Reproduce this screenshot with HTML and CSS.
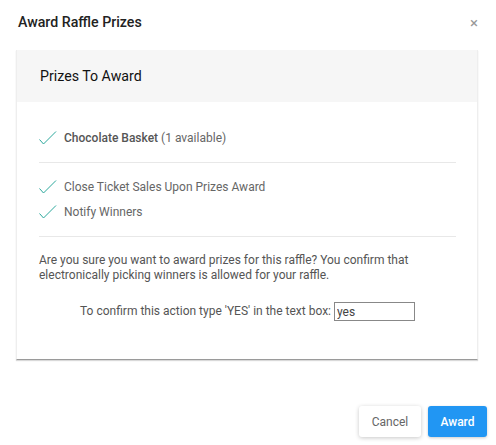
FILE: index.html
```html
<!DOCTYPE html>
<html>
<head>
<meta charset="utf-8">
<link rel="stylesheet" href="styles.css">
</head>
<body>
<div class="modal">
  <div class="modal-header">
    <h1 class="modal-title">Award Raffle Prizes</h1>
    <span class="close">&times;</span>
  </div>
  <div class="card">
    <div class="card-header">Prizes To Award</div>
    <div class="card-body">
      <ul class="list">
        <li class="item"><svg class="check" viewBox="0 0 18 14" width="18" height="14"><path d="M0.5 8.5 L4.5 13 L17 0.5" fill="none" stroke="#2aa79b" stroke-width="1"/></svg><span><b class="prize">Chocolate Basket</b> (1 available)</span></li>
      </ul>
      <hr class="divider">
      <ul class="list">
        <li class="item"><svg class="check" viewBox="0 0 18 14" width="18" height="14"><path d="M0.5 8.5 L4.5 13 L17 0.5" fill="none" stroke="#2aa79b" stroke-width="1"/></svg><span>Close Ticket Sales Upon Prizes Award</span></li>
        <li class="item"><svg class="check" viewBox="0 0 18 14" width="18" height="14"><path d="M0.5 8.5 L4.5 13 L17 0.5" fill="none" stroke="#2aa79b" stroke-width="1"/></svg><span>Notify Winners</span></li>
      </ul>
      <hr class="divider divider-last">
      <p class="warning">Are you sure you want to award prizes for this raffle? You confirm that electronically picking winners is allowed for your raffle.</p>
      <p class="confirm">To confirm this action type 'YES' in the text box: <input class="confirm-input" type="text" value="yes"></p>
    </div>
  </div>
  <div class="modal-footer">
    <button class="btn btn-cancel">Cancel</button>
    <button class="btn btn-award">Award</button>
  </div>
</div>
</body>
</html>
```
FILE: styles.css
```css
html, body {
  margin: 0;
  padding: 0;
  background: #fff;
}
body {
  font-family: Roboto, "Liberation Sans", sans-serif;
  color: #555;
}
.modal {
  width: 496px;
  height: 445px;
  box-sizing: border-box;
  display: flex;
  flex-direction: column;
}
.modal-header {
  display: flex;
  justify-content: space-between;
  align-items: flex-start;
  padding: 13px 18px 0 18px;
  height: 50px;
  box-sizing: border-box;
}
.modal-title {
  margin: 0;
  font-size: 14.2px;
  font-weight: 500;
  color: #222;
  line-height: 18px;
}
.close {
  font-size: 15px;
  line-height: 16px;
  color: #999;
  margin-top: 2px;
}
.card {
  margin: 0 18px 0 16px;
  border-left: 1px solid #eee;
  border-right: 1px solid #eee;
  border-bottom: 1px solid #9a9a9a;
  box-shadow: 0 1px 1px rgba(0,0,0,0.15);
}
.card-header {
  background: #f6f6f6;
  height: 52px;
  box-sizing: border-box;
  padding-left: 23px;
  display: flex;
  align-items: center;
  font-size: 14.2px;
  color: #111;
}
.card-body {
  padding: 27px 21px 38px 22px;
}
.list {
  list-style: none;
  margin: 0;
  padding: 0;
  display: flex;
  flex-direction: column;
  gap: 7px;
}
.item {
  display: flex;
  align-items: center;
  font-size: 12px;
  line-height: 18px;
  color: #666;
}
.check {
  margin: 0 7px 0 0;
  flex: none;
}
.prize {
  font-weight: 500;
  color: #555;
}
.divider {
  border: 0;
  border-top: 1px solid #e8e8e8;
  margin: 15px 0 15px 0;
}
.divider-last {
  margin-bottom: 16px;
}
.divider + .list {
  margin-top: 1px;
}
.warning {
  margin: 0;
  font-size: 12px;
  line-height: 15px;
  color: #555;
  padding-right: 20px;
}
.confirm {
  margin: 19px 0 0 0;
  text-align: center;
  font-size: 12px;
  color: #555;
  line-height: 19px;
}
.confirm-input {
  width: 81px;
  height: 19px;
  box-sizing: border-box;
  border: 1px solid #888;
  padding: 0 2px;
  font-family: Roboto, "Liberation Sans", sans-serif;
  font-size: 12px;
  color: #444;
  vertical-align: middle;
  margin: 0;
}
.modal-footer {
  display: flex;
  justify-content: flex-end;
  gap: 7px;
  padding: 0 9px 0 0;
  margin-top: 46px;
}
.btn {
  height: 31px;
  border: 0;
  border-radius: 3px;
  font-family: Roboto, "Liberation Sans", sans-serif;
  font-size: 12px;
  padding: 0;
  cursor: pointer;
}
.btn-cancel {
  width: 62px;
  background: #fff;
  color: #666;
  box-shadow: 0 1px 4px rgba(0,0,0,0.22);
}
.btn-award {
  width: 59px;
  background: #2196f3;
  color: #fff;
  font-weight: 500;
  box-shadow: 0 1px 3px rgba(0,0,0,0.2);
}
```
